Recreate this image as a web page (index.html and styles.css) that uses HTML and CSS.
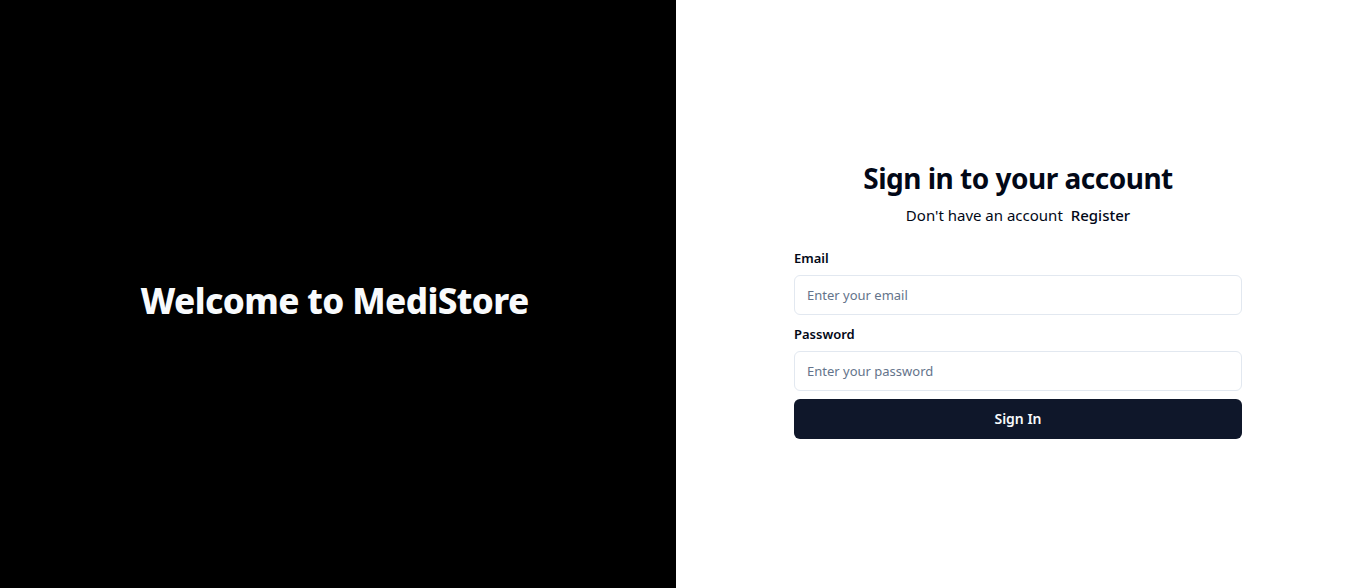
FILE: index.html
```html
<!DOCTYPE html>
<html lang="en">
<head>
<meta charset="utf-8">
<title>MediStore - Sign in</title>
<link rel="stylesheet" href="styles.css">
</head>
<body>
<main class="page">
  <section class="hero">
    <h1 class="hero-title">Welcome to MediStore</h1>
  </section>
  <section class="auth">
    <div class="auth-box">
      <h2 class="auth-title">Sign in to your account</h2>
      <p class="auth-sub">Don't have an account <a class="auth-link" href="#">Register</a></p>
      <form class="form">
        <div class="field">
          <label class="label" for="email">Email</label>
          <input class="input" id="email" type="email" placeholder="Enter your email">
        </div>
        <div class="field">
          <label class="label" for="password">Password</label>
          <input class="input" id="password" type="password" placeholder="Enter your password">
        </div>
        <button class="btn" type="button">Sign In</button>
      </form>
    </div>
  </section>
</main>
</body>
</html>
```
FILE: styles.css
```css
* { box-sizing: border-box; }
html, body { margin: 0; padding: 0; }
body {
  font-family: "Noto Sans", "Open Sans", sans-serif;
  color: #020817;
  background: #fff;
}
.page {
  display: flex;
  height: 588px;
}
.hero {
  width: 676px;
  flex: none;
  background: #000;
  display: flex;
  align-items: center;
  justify-content: center;
  padding-top: 14px;
  padding-right: 7px;
}
.hero-title {
  margin: 0;
  color: #f8fafc;
  font-size: 35px;
  line-height: 40px;
  font-weight: 800;
  letter-spacing: -0.6px;
}
.auth {
  flex: 1;
  display: flex;
  align-items: center;
  justify-content: center;
  padding-top: 10px;
  padding-left: 2px;
}
.auth-box {
  width: 448px;
}
.auth-title {
  margin: 0;
  text-align: center;
  font-size: 28px;
  line-height: 36px;
  font-weight: 700;
  letter-spacing: -0.5px;
}
.auth-sub {
  margin: 7px 0 0;
  text-align: center;
  font-size: 15px;
  line-height: 24px;
}
.auth-link {
  color: #020817;
  text-decoration: none;
  font-weight: 500;
  margin-left: 4px;
}
.form {
  margin-top: 21px;
  display: flex;
  flex-direction: column;
}
.field {
  display: flex;
  flex-direction: column;
  gap: 7px;
  margin-bottom: 9px;
}
.field + .field { margin-bottom: 8px; }
.label {
  font-size: 13px;
  line-height: 20px;
  font-weight: 600;
}
.input {
  height: 40px;
  width: 100%;
  border: 1px solid #e2e8f0;
  border-radius: 6px;
  padding: 0 12px;
  font-family: inherit;
  font-size: 13px;
  color: #020817;
  background: #fff;
  outline: none;
}
.input::placeholder { color: #64748b; }
.btn {
  height: 40px;
  width: 100%;
  border: none;
  border-radius: 6px;
  background: #0f172a;
  color: #f8fafc;
  font-family: inherit;
  font-size: 14px;
  font-weight: 600;
  cursor: pointer;
}
```
